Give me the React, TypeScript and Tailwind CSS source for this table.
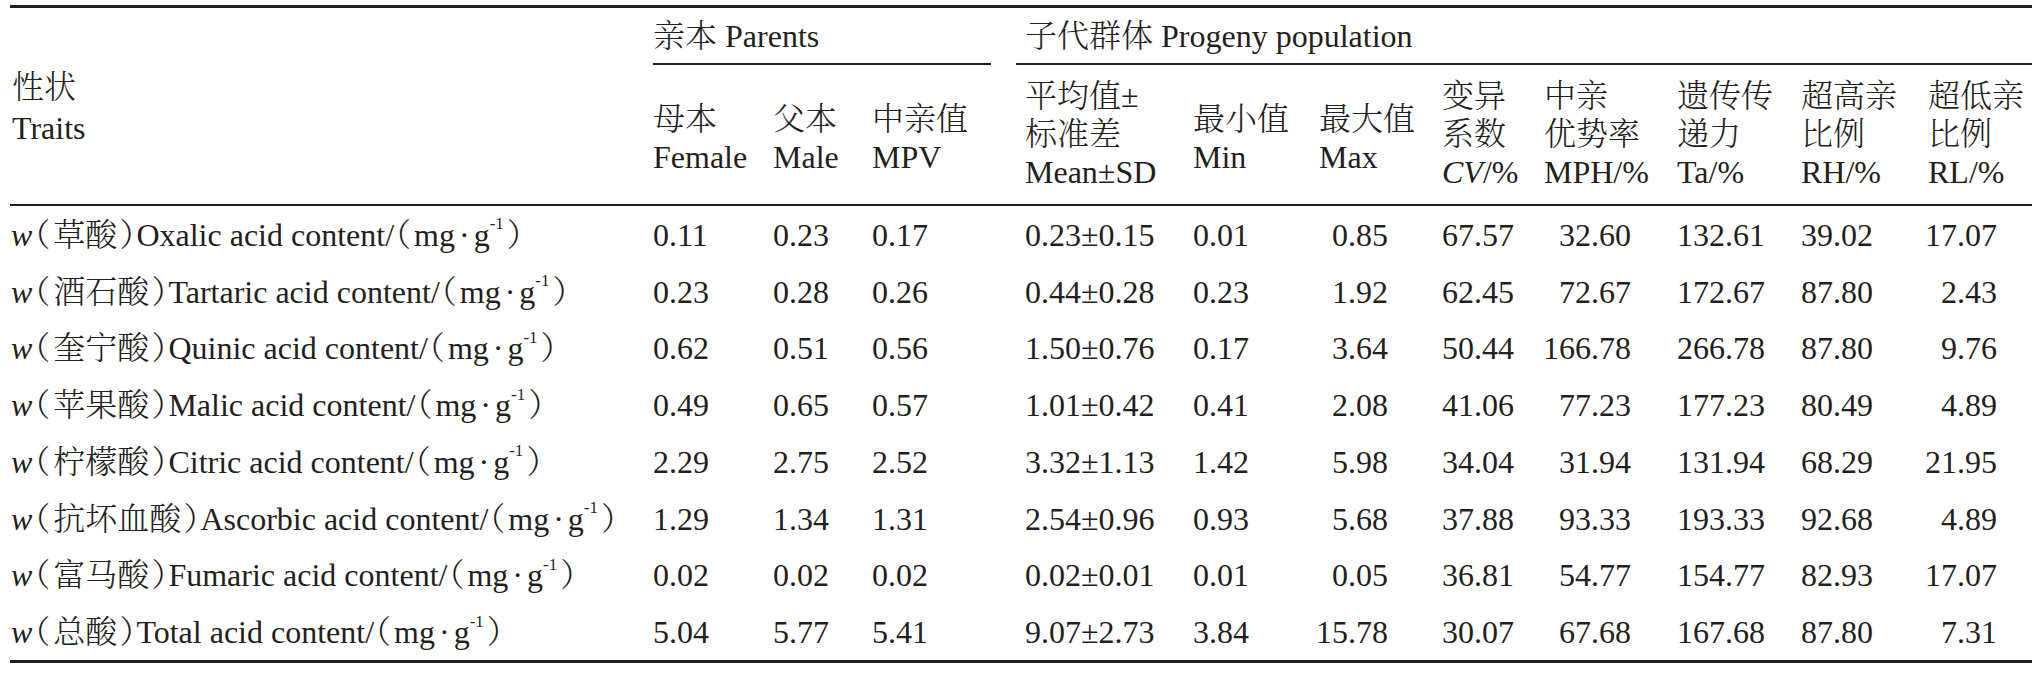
import React from "react";

const COLS =
  "grid grid-cols-[643px_120px_99px_153px_168px_126px_123px_102px_133px_124px_127px_104px]";

const LINE = "bg-[#231f20]";
const CJK = "font-light";

type Row = { cn: string; en: string; vals: string[] };

const rows: Row[] = [
  { cn: "草酸", en: "Oxalic acid content", vals: ["0.11", "0.23", "0.17", "0.23±0.15", "0.01", "0.85", "67.57", "32.60", "132.61", "39.02", "17.07"] },
  { cn: "酒石酸", en: "Tartaric acid content", vals: ["0.23", "0.28", "0.26", "0.44±0.28", "0.23", "1.92", "62.45", "72.67", "172.67", "87.80", "2.43"] },
  { cn: "奎宁酸", en: "Quinic acid content", vals: ["0.62", "0.51", "0.56", "1.50±0.76", "0.17", "3.64", "50.44", "166.78", "266.78", "87.80", "9.76"] },
  { cn: "苹果酸", en: "Malic acid content", vals: ["0.49", "0.65", "0.57", "1.01±0.42", "0.41", "2.08", "41.06", "77.23", "177.23", "80.49", "4.89"] },
  { cn: "柠檬酸", en: "Citric acid content", vals: ["2.29", "2.75", "2.52", "3.32±1.13", "1.42", "5.98", "34.04", "31.94", "131.94", "68.29", "21.95"] },
  { cn: "抗坏血酸", en: "Ascorbic acid content", vals: ["1.29", "1.34", "1.31", "2.54±0.96", "0.93", "5.68", "37.88", "93.33", "193.33", "92.68", "4.89"] },
  { cn: "富马酸", en: "Fumaric acid content", vals: ["0.02", "0.02", "0.02", "0.02±0.01", "0.01", "0.05", "36.81", "54.77", "154.77", "82.93", "17.07"] },
  { cn: "总酸", en: "Total acid content", vals: ["5.04", "5.77", "5.41", "9.07±2.73", "3.84", "15.78", "30.07", "67.68", "167.68", "87.80", "7.31"] },
];

const valAlign = [
  "",
  "",
  "",
  "",
  "",
  "justify-end pr-[54px]",
  "",
  "justify-end pr-[46px]",
  "",
  "",
  "justify-end pr-[35px]",
];

function C({ children }: { children: React.ReactNode }) {
  return <span className={CJK}>{children}</span>;
}

function Sub({ lines, two }: { lines: React.ReactNode[]; two?: boolean }) {
  return (
    <div
      className={`flex flex-col justify-center leading-[38px] whitespace-nowrap ${
        two ? "pt-[8px]" : ""
      }`}
    >
      {lines.map((l, i) => (
        <div key={i}>{l}</div>
      ))}
    </div>
  );
}

export default function App() {
  return (
    <div className="bg-white w-[2038px] h-[674px] pt-[5px] pl-[10px] text-[32px] text-[#231f20] font-normal [font-family:'Liberation_Serif','Noto_Serif_CJK_SC','Noto_Sans_CJK_SC',serif] [font-feature-settings:'halt']">
      <div className="w-[2022px]">
        <div className={`h-[3px] ${LINE}`} />
        {/* header */}
        <div className={`${COLS} grid-rows-[56.5px_139.5px]`}>
          <div className="row-span-2 flex flex-col justify-center leading-[41px] pl-[2px] pt-[4px]">
            <div>
              <C>性状</C>
            </div>
            <div>Traits</div>
          </div>
          <div className="col-span-3 flex flex-col">
            <div className="flex-1 flex items-center whitespace-nowrap">
              <C>亲本</C>&nbsp;Parents
            </div>
            <div className={`h-[1.5px] mr-[34px] ${LINE}`} />
          </div>
          <div className="col-span-8 flex flex-col">
            <div className="flex-1 flex items-center whitespace-nowrap">
              <C>子代群体</C>&nbsp;Progeny population
            </div>
            <div className={`h-[1.5px] -ml-[9px] ${LINE}`} />
          </div>
          <Sub two lines={[<C key="a">母本</C>, "Female"]} />
          <Sub two lines={[<C key="a">父本</C>, "Male"]} />
          <Sub two lines={[<C key="a">中亲值</C>, "MPV"]} />
          <Sub lines={[<span key="a"><C>平均值</C>±</span>, <C key="b">标准差</C>, "Mean±SD"]} />
          <Sub two lines={[<C key="a">最小值</C>, "Min"]} />
          <Sub two lines={[<C key="a">最大值</C>, "Max"]} />
          <Sub
            lines={[
              <C key="a">变异</C>,
              <C key="b">系数</C>,
              <span key="cv">
                <i>CV</i>/%
              </span>,
            ]}
          />
          <Sub lines={[<C key="a">中亲</C>, <C key="b">优势率</C>, "MPH/%"]} />
          <Sub lines={[<C key="a">遗传传</C>, <C key="b">递力</C>, "Ta/%"]} />
          <Sub lines={[<C key="a">超高亲</C>, <C key="b">比例</C>, "RH/%"]} />
          <Sub lines={[<C key="a">超低亲</C>, <C key="b">比例</C>, "RL/%"]} />
        </div>
        <div className={`h-[2px] ${LINE}`} />
        {/* body */}
        {rows.map((r) => (
          <div key={r.en} className={`${COLS} h-[56.75px] pt-[1px]`}>
            <div className="flex items-center whitespace-nowrap pl-[1px]">
              <i>w</i>
              <C>
                <span className="pl-[2px] pr-[3px]">（</span>
                <span>{r.cn}</span>
                <span className="pl-[2px] pr-[1px]">）</span>
              </C>
              <span>{r.en}/</span>
              <C>
                <span className="pl-[1px] pr-[3px]">（</span>
              </C>
              <span>mg</span>
              <span className="mx-[4px]">·</span>
              <span>g</span>
              <span className="relative -top-[11px] text-[17px] leading-none">-1</span>
              <C>
                <span className="pl-[3px]">）</span>
              </C>
            </div>
            {r.vals.map((v, i) => (
              <div key={i} className={`flex items-center whitespace-nowrap ${valAlign[i]}`}>
                {v}
              </div>
            ))}
          </div>
        ))}
        <div className={`h-[3px] ${LINE}`} />
      </div>
    </div>
  );
}
